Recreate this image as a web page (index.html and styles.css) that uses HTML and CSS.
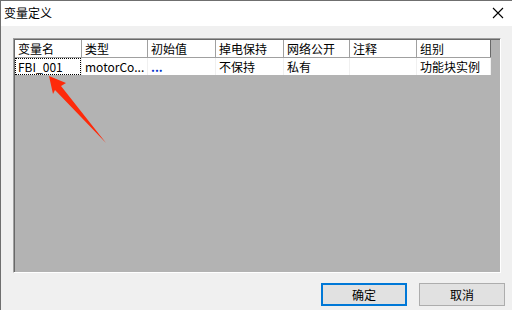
FILE: index.html
```html
<!DOCTYPE html>
<html lang="zh-CN">
<head>
  <meta charset="UTF-8">
  <title>变量定义</title>
  <link rel="stylesheet" href="styles.css">
</head>
<body>
  <div class="window">
    <div class="title-bar">
      <span class="title">变量定义</span>
      <svg class="close" width="12" height="12" viewBox="0 0 12 12">
        <path d="M1 1 L11 11 M11 1 L1 11" stroke="#000" stroke-width="1.1" fill="none"/>
      </svg>
    </div>
    <div class="content">
      <div class="list-box">
        <div class="list-inner">
          <div class="row header">
            <div class="cell">变量名</div>
            <div class="cell">类型</div>
            <div class="cell">初始值</div>
            <div class="cell">掉电保持</div>
            <div class="cell">网络公开</div>
            <div class="cell">注释</div>
            <div class="cell">组别</div>
          </div>
          <div class="row data">
            <div class="cell"><span class="focus">FBI_001</span></div>
            <div class="cell">motorCo...</div>
            <div class="cell blue">...</div>
            <div class="cell">不保持</div>
            <div class="cell">私有</div>
            <div class="cell"></div>
            <div class="cell">功能块实例</div>
          </div>
        </div>
      </div>
      <div class="buttons">
        <button class="btn default">确定</button>
        <button class="btn">取消</button>
      </div>
    </div>
    <svg class="arrow" width="120" height="150" viewBox="0 0 120 150">
      <polygon points="49,76 66,83 61,86 106,143 55,90 53,94" fill="#fe2a0a"/>
    </svg>
  </div>
</body>
</html>
```

FILE: styles.css
```css
body {
  margin: 0;
  font-family: "Noto Sans CJK SC", "Liberation Sans", sans-serif;
  font-size: 12px;
  color: #000;
}

.window {
  position: relative;
  width: 512px;
  height: 310px;
  box-sizing: border-box;
  border-top: 1px solid #6f6f6f;
  border-left: 1px solid #6f6f6f;
  background: #f0f0f0;
  overflow: hidden;
}

.title-bar {
  height: 25px;
  background: #fff;
  display: flex;
  align-items: center;
  justify-content: space-between;
  padding: 0 8px 0 3px;
}

.title {
  line-height: 16px;
  margin-top: -2px;
}

.close {
  display: block;
  margin-top: -2px;
}

.content {
  padding: 12px 7px 0 12px;
}

.list-box {
  width: 488px;
  height: 235px;
  box-sizing: border-box;
  border: 1px solid;
  border-color: #a0a0a0 #fff #fff #a0a0a0;
}

.list-inner {
  height: 100%;
  box-sizing: border-box;
  border-top: 1px solid #696969;
  border-left: 1px solid #696969;
  background: #b3b3b3;
}

.row {
  display: grid;
  grid-template-columns: 67px 66px 68px 68px 66px 67px 74px;
  width: 476px;
}

.row .cell {
  height: 17px;
  line-height: 17px;
  padding-left: 3px;
  box-sizing: border-box;
  white-space: nowrap;
  overflow: hidden;
}

.header {
  background: #fff;
  border-bottom: 1px solid #a0a0a0;
}

.header .cell {
  border-right: 1px solid #a0a0a0;
}

.header .cell:last-child {
  border-right: 1px solid #696969;
}

.data {
  background: #fff;
}

.data .cell {
  border-right: 1px solid #f0f0f0;
}

.data .cell:first-child {
  padding-left: 0;
}

.focus {
  display: block;
  height: 17px;
  line-height: 15px;
  box-sizing: border-box;
  padding-left: 2px;
  border: 1px dotted #000;
}

.blue {
  color: #0033cc;
  font-weight: bold;
}

.buttons {
  display: flex;
  justify-content: flex-end;
  gap: 12px;
  margin-top: 10px;
}

.btn {
  width: 86px;
  height: 23px;
  background: #e1e1e1;
  border: 1px solid #adadad;
  font-family: inherit;
  font-size: 12px;
  padding: 0;
  margin: 0;
}

.btn.default {
  border: 2px solid #0078d7;
}

.arrow {
  position: absolute;
  left: -1px;
  top: -1px;
}
```
